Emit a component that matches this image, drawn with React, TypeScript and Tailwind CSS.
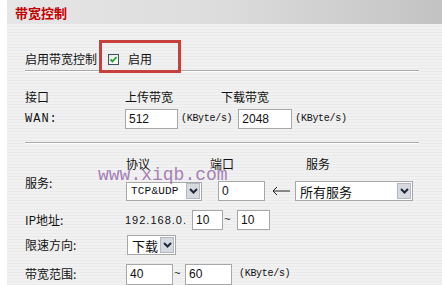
import React from "react";

const cjk = "font-['Noto_Sans_CJK_SC','Noto_Sans',sans-serif]";
const mono = "font-['Liberation_Mono','DejaVu_Sans_Mono',monospace]";
const sans = "font-['Liberation_Sans','Arial',sans-serif]";

function Input({ w, h = 20, value }: { w: number; h?: number; value: string }) {
  return (
    <div
      className={`flex items-center bg-white border border-[#a7a7a7] pl-[3px] text-[12px] text-[#111] ${sans}`}
      style={{ width: w, height: h }}
    >
      {value}
    </div>
  );
}

function DropBtn() {
  return (
    <span className="ml-auto mr-[1px] flex h-[16px] w-[14px] items-center justify-center border border-[#b4b8c2] bg-[#d6d9e0]">
      <svg width="9" height="6" viewBox="0 0 9 6">
        <path d="M1 1 L4.5 4.5 L8 1" fill="none" stroke="#1e2a3a" strokeWidth="2" />
      </svg>
    </span>
  );
}

function Select({ w, h = 20, children, cls = "" }: { w: number; h?: number; children: React.ReactNode; cls?: string }) {
  return (
    <div
      className={`flex items-center bg-white border border-[#a7a7a7] pl-[4px] ${cls}`}
      style={{ width: w, height: h }}
    >
      {children}
      <DropBtn />
    </div>
  );
}

export default function App() {
  return (
    <div className={`relative w-[442px] h-[285px] overflow-hidden bg-white text-[12px] text-[#111] ${cjk}`}>
      <div className="ml-[7px] flex h-full flex-col bg-[repeating-linear-gradient(180deg,#f1f1f1_0px,#f1f1f1_2px,#eaeaea_2px,#eaeaea_3px)]">
        {/* header */}
        <div className="flex h-[24px] shrink-0 items-center bg-gradient-to-r from-[#e6e6e6] via-[#dcdcdc] to-[#c3c3c3] pl-[8px]">
          <span className="text-[13px] font-bold leading-none text-[#c40000]">带宽控制</span>
        </div>

        <div className="flex flex-col pl-[18px] pr-[23px]">
          {/* enable row */}
          <div className="mt-[24px] flex h-[22px] items-center leading-[16px]">
            <span>启用带宽控制</span>
            <span className="ml-[11px] flex h-[11px] w-[11px] items-center justify-center border border-[#3d5466] bg-[linear-gradient(135deg,#e4e6e8,#ffffff)]">
              <svg width="9" height="9" viewBox="0 0 9 9">
                <path d="M1.5 4.5 L3.5 6.5 L7.5 2" fill="none" stroke="#22a02a" strokeWidth="1.8" />
              </svg>
            </span>
            <span className="ml-[9px]">启用</span>
          </div>
          <div className="h-px bg-[#a9a9a9]" />
          <div className="h-px bg-white" />

          {/* 接口 */}
          <div className="mt-[14px] flex h-[22px] items-center leading-[16px]">
            <span className="w-[100px]">接口</span>
            <span className="w-[96px]">上传带宽</span>
            <span>下载带宽</span>
          </div>

          {/* WAN */}
          <div className="flex h-[22px] items-center leading-[16px]">
            <span className={`w-[100px] ${mono} text-[12px] tracking-[1px]`}>WAN:</span>
            <Input w={53} value="512" />
            <span className={`ml-[3px] ${mono} text-[10px] tracking-[-0.3px]`}>(KByte/s)</span>
            <span className="ml-[6px]">
              <Input w={54} value="2048" />
            </span>
            <span className={`ml-[3px] ${mono} text-[10px] tracking-[-0.3px]`}>(KByte/s)</span>
          </div>

          <div className="mt-[12px] h-px bg-[#a9a9a9]" />
          <div className="h-px bg-white" />

          {/* 服务 block */}
          <div className="mt-[10px] flex leading-[16px]">
            <span className="w-[100px] pt-[21px]">服务:</span>
            <div className="flex flex-col">
              <div className="flex h-[20px] items-center">
                <span className="ml-[1px] w-[84px]">协议</span>
                <span className="w-[96px]">端口</span>
                <span>服务</span>
              </div>
              <div className="mt-[6px] flex h-[22px] items-center">
                <span className="ml-[1px]">
                  <Select w={76} h={19}>
                    <span className={`${mono} text-[11px] tracking-[0.2px]`}>TCP&amp;UDP</span>
                  </Select>
                </span>
                <span className="ml-[16px]">
                  <Input w={47} value="0" />
                </span>
                <span className="ml-[7px] flex w-[18px] items-center">
                  <svg width="18" height="10" viewBox="0 0 18 10">
                    <path d="M5 1 L1 5 L5 9" fill="none" stroke="#222" strokeWidth="1" />
                    <path d="M1 5 H18" stroke="#222" strokeWidth="1" />
                  </svg>
                </span>
                <span className="ml-[5px]">
                  <Select w={118}>
                    <span className="text-[13px] leading-none">所有服务</span>
                  </Select>
                </span>
              </div>
            </div>
          </div>

          {/* IP */}
          <div className="mt-[7px] flex h-[22px] items-center leading-[16px]">
            <span className="w-[100px]">IP地址:</span>
            <span className={`${sans} text-[11px] tracking-[1px]`}>192.168.0.</span>
            <span className="ml-[5px]">
              <Input w={31} value="10" />
            </span>
            <span className={`${mono} w-[14px] text-[11px] pl-[1px]`}>~</span>
            <Input w={33} value="10" />
          </div>

          {/* 限速方向 */}
          <div className="mt-[3px] flex h-[22px] items-center leading-[16px]">
            <span className="w-[100px]">限速方向:</span>
            <span className="ml-[2px]">
              <Select w={49}>
                <span className="text-[13px] leading-none">下载</span>
              </Select>
            </span>
          </div>

          {/* 带宽范围 */}
          <div className="mt-[7px] flex h-[22px] items-center leading-[16px]">
            <span className="w-[100px]">带宽范围:</span>
            <span className="ml-[1px]">
              <Input w={47} h={21} value="40" />
            </span>
            <span className={`${mono} w-[12px] text-[11px] pl-[1px]`}>~</span>
            <Input w={47} h={21} value="60" />
            <span className={`ml-[7px] ${mono} text-[10px] tracking-[-0.3px]`}>(KByte/s)</span>
          </div>
        </div>
      </div>

      {/* watermark */}
      <div className={`pointer-events-none absolute left-[98px] top-[165px] ${"font-['Liberation_Mono','Courier_New',monospace]"} text-[18px] leading-[20px] text-[#9260a8]/80`}>
        www.xiqb.com
      </div>

      {/* red annotation box */}
      <div className="pointer-events-none absolute left-[99px] top-[40px] h-[33px] w-[82px] border-[3px] border-[#c8403c]" />
    </div>
  );
}
